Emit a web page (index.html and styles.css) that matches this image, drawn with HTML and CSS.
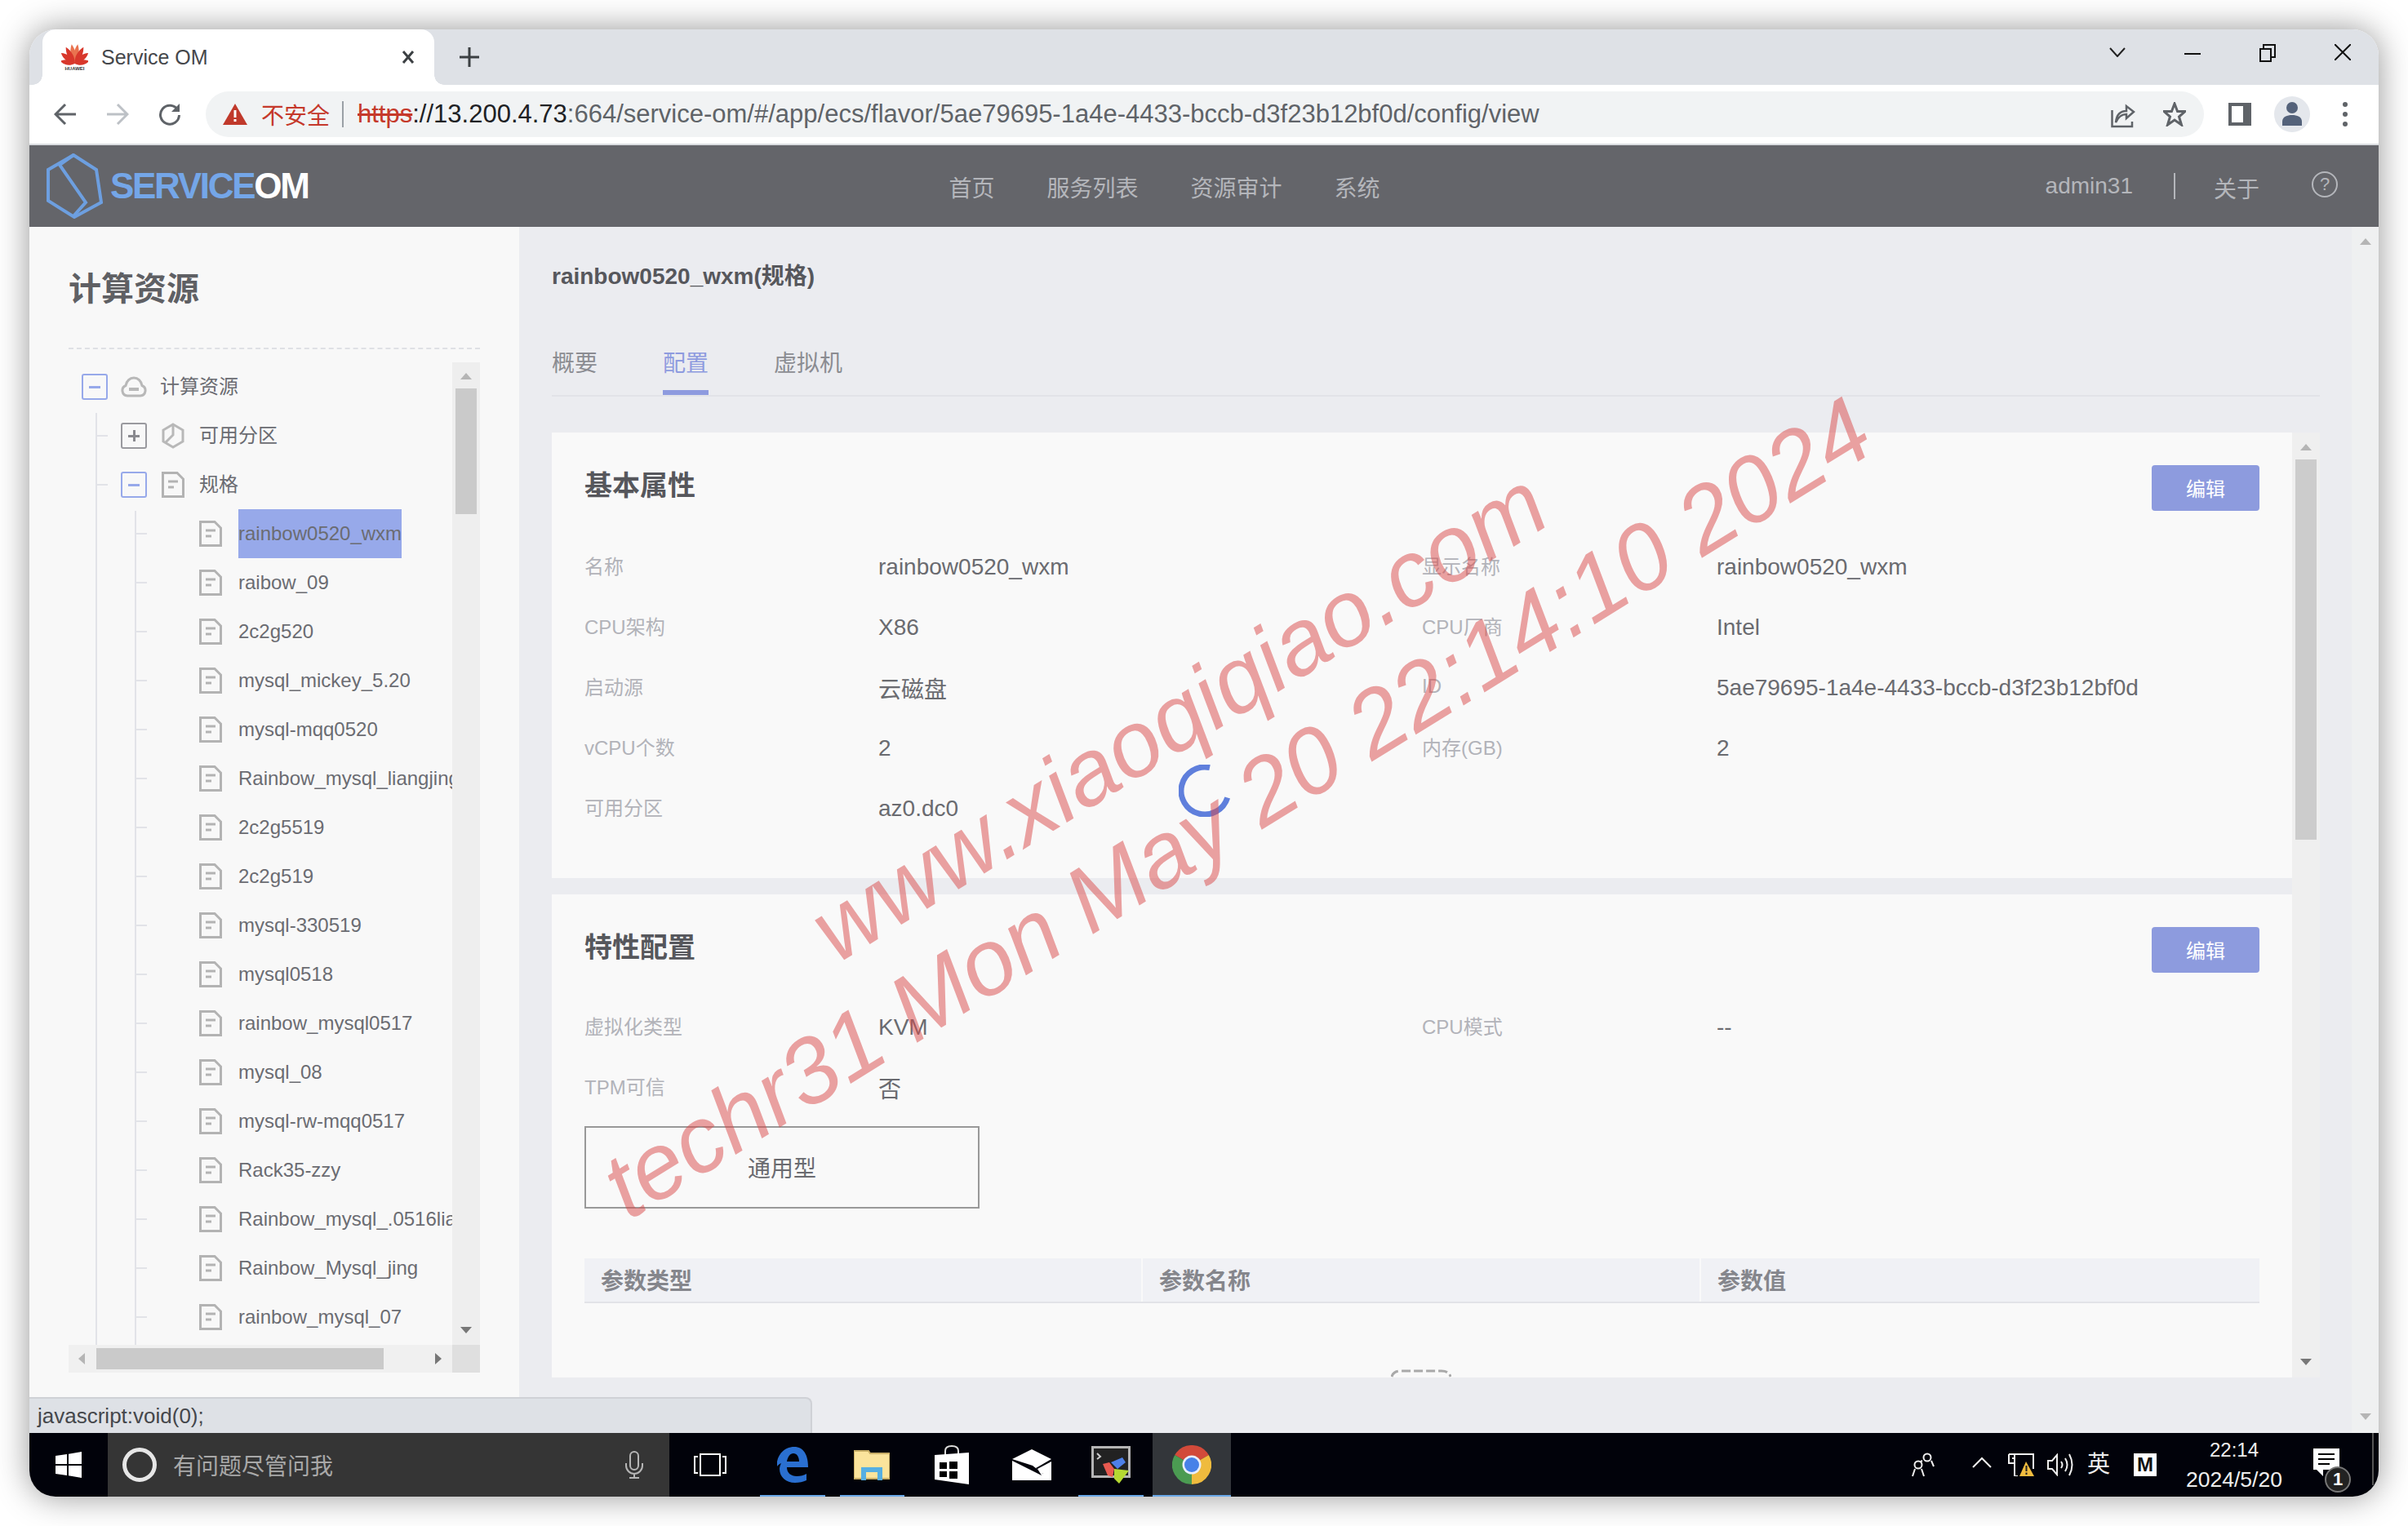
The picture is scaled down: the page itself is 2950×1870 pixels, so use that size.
FILE: index.html
```html
<!DOCTYPE html>
<html lang="zh-CN">
<head>
<meta charset="utf-8">
<title>Service OM</title>
<link rel="stylesheet" href="styles.css">
</head>
<body>
<svg class="defs" width="0" height="0" aria-hidden="true">
  <symbol id="doc" viewBox="0 0 28 32"><path d="M1.5 1.5H19L26.5 9V30.5H1.5Z" fill="none" stroke="#b3b3b3" stroke-width="3"/><path d="M8 12H20M8 19H15" stroke="#b3b3b3" stroke-width="3"/></symbol>
</svg>
<div class="window">
  <div class="tabstrip">
    <div class="tab">
      <svg class="favicon" viewBox="0 0 33 32" width="33" height="32">
        <g fill="#d8382c">
          <path d="M16.5 24C12 17 12.5 8 16.5 0C20.5 8 21 17 16.5 24Z" fill="#e9734f" transform="rotate(-9 16.5 24)"/>
          <path d="M16.5 24C12 17 12.5 8 16.5 0C20.5 8 21 17 16.5 24Z" fill="#e9734f" transform="rotate(9 16.5 24)"/>
          <path d="M16.5 24C12 17 12.5 8 16.5 1C20.5 8 21 17 16.5 24Z" transform="rotate(-28 16.5 24)"/>
          <path d="M16.5 24C12 17 12.5 8 16.5 1C20.5 8 21 17 16.5 24Z" transform="rotate(28 16.5 24)"/>
          <path d="M16.5 24C12 17 12.5 8 16.5 3C20.5 8 21 17 16.5 24Z" transform="rotate(-52 16.5 24)"/>
          <path d="M16.5 24C12 17 12.5 8 16.5 3C20.5 8 21 17 16.5 24Z" transform="rotate(52 16.5 24)"/>
          <path d="M16.5 24C12 18 12.5 12 16.5 6C20.5 12 21 18 16.5 24Z" transform="rotate(-80 16.5 24)"/>
          <path d="M16.5 24C12 18 12.5 12 16.5 6C20.5 12 21 18 16.5 24Z" transform="rotate(80 16.5 24)"/>
        </g>
        <text x="16.5" y="32" text-anchor="middle" class="favicon-text">HUAWEI</text>
      </svg>
      <span class="tab-title">Service OM</span>
      <svg class="tab-close" viewBox="0 0 16 20" width="16" height="20"><path d="M2 3L14 17M14 3L2 17" stroke="#3c4043" stroke-width="3"/></svg>
    </div>
    <svg class="newtab" viewBox="0 0 24 24" width="24" height="24"><path d="M12 0V24M0 12H24" stroke="#3c4043" stroke-width="3"/></svg>
    <div class="winctrl">
      <svg viewBox="0 0 20 12" width="20" height="12"><path d="M1 1L10 11L19 1" fill="none" stroke="#222" stroke-width="2"/></svg>
      <svg class="winctrl-min" viewBox="0 0 20 2" width="20" height="2"><path d="M0 1H20" stroke="#111" stroke-width="2"/></svg>
      <svg class="winctrl-max" viewBox="0 0 20 22" width="20" height="22"><path d="M1 6H14V21H1ZM5 6V1H19V16H14" fill="none" stroke="#111" stroke-width="2"/></svg>
      <svg class="winctrl-close" viewBox="0 0 20 20" width="20" height="20"><path d="M0 0L20 20M20 0L0 20" stroke="#111" stroke-width="2"/></svg>
    </div>
  </div>

  <div class="toolbar">
    <svg class="navbtn" viewBox="0 0 28 28" width="28" height="28"><path d="M27 14H3M14 2L2 14L14 26" fill="none" stroke="#5f6368" stroke-width="3"/></svg>
    <svg class="navbtn" viewBox="0 0 28 28" width="28" height="28"><path d="M1 14H25M14 2L26 14L14 26" fill="none" stroke="#bdc1c6" stroke-width="3"/></svg>
    <svg class="navbtn" viewBox="0 0 28 28" width="28" height="28"><path d="M24 9A11.5 11.5 0 1 0 25.5 15" fill="none" stroke="#5f6368" stroke-width="3"/><path d="M26 1V11H16Z" fill="#5f6368"/></svg>
    <div class="address">
      <svg class="warn" viewBox="0 0 30 26" width="30" height="26"><path d="M15 0L30 26H0Z" fill="#c0392b"/><path d="M13.5 8H16.5V17H13.5ZM13.5 19H16.5V22H13.5Z" fill="#fff"/></svg>
      <span class="insecure">不安全</span>
      <span class="addr-sep"></span>
      <span class="url"><s class="url-scheme">https</s><span class="url-host">://13.200.4.73</span><span class="url-rest">:664/service-om/#/app/ecs/flavor/5ae79695-1a4e-4433-bccb-d3f23b12bf0d/config/view</span></span>
      <span class="addr-icons">
        <svg viewBox="0 0 30 34" width="30" height="34"><path d="M1.5 12V32H26V26" fill="none" stroke="#5f6368" stroke-width="2.5"/><path d="M6 27C7 17 12 13 19 13V7L28 14L19 22V17C13 17 9 20 6 27Z" fill="none" stroke="#5f6368" stroke-width="2.5"/></svg>
        <svg viewBox="0 0 28 30" width="28" height="30"><path d="M14 2L17.6 11.5H27L19.5 18L22.5 28L14 22L5.500 28L8.500 18L1 11.500H10.400Z" fill="none" stroke="#5f6368" stroke-width="3"/></svg>
      </span>
    </div>
    <svg class="panelbtn" viewBox="0 0 28 28" width="28" height="28"><path d="M0 0H28V28H0Z" fill="#5f6368"/><path d="M4 4H18V24H4Z" fill="#fff"/></svg>
    <span class="profile">
      <svg viewBox="0 0 26 30" width="26" height="30"><circle cx="13" cy="8" r="7" fill="#54627a"/><path d="M1 30V25C1 19 7 17 13 17S25 19 25 25V30Z" fill="#54627a"/></svg>
    </span>
    <svg class="menubtn" viewBox="0 0 8 32" width="8" height="32"><circle cx="4" cy="4" r="3" fill="#5f6368"/><circle cx="4" cy="16" r="3" fill="#5f6368"/><circle cx="4" cy="28" r="3" fill="#5f6368"/></svg>
  </div>

  <header class="appbar">
    <a class="logo">
      <svg viewBox="0 0 70 80" width="70" height="80"><path d="M34 2L62 20L68 60L35 78L3 58V20Z" fill="none" stroke="#6d9fe0" stroke-width="4"/><path d="M34 2L17 14L49 60L33 78" fill="none" stroke="#6d9fe0" stroke-width="4"/></svg>
      <span class="logo-text"><span class="logo-blue">SERVICE</span>OM</span>
    </a>
    <nav class="appnav"><a>首页</a><a>服务列表</a><a>资源审计</a><a>系统</a></nav>
    <div class="appuser">
      <span>admin31</span>
      <span class="appuser-sep"></span>
      <span class="appuser-about">关于</span>
      <span class="help">?</span>
    </div>
  </header>

  <div class="content">
    <aside class="sidebar">
      <h2 class="side-title">计算资源</h2>
      <div class="tree">
        <div class="tree-view">
          <span class="guide guide-1"></span>
          <span class="guide guide-2"></span>
          <div class="row row-0"><span class="toggle toggle-open"></span><svg class="ico" viewBox="0 0 32 26" width="32" height="26"><path d="M8 24A6.500 6.500 0 0 1 6 11.500C7 6 11 2 16 2S25 6 26 11.500A6.500 6.500 0 0 1 24 24Z" fill="none" stroke="#b8b8b8" stroke-width="3"/><path d="M10 16H22" stroke="#b8b8b8" stroke-width="4"/></svg><span class="label">计算资源</span></div>
          <div class="row row-1"><span class="toggle toggle-closed"></span><svg class="ico" viewBox="0 0 28 32" width="28" height="32"><path d="M14 2L26 9V23L14 30L2 23V9Z" fill="none" stroke="#b8b8b8" stroke-width="3"/><path d="M14 2V15L5 24" fill="none" stroke="#b8b8b8" stroke-width="3"/></svg><span class="label">可用分区</span></div>
          <div class="row row-1"><span class="toggle toggle-open"></span><svg class="ico" width="28" height="32"><use href="#doc"/></svg><span class="label">规格</span></div>
          <div class="row row-2"><svg class="ico" width="28" height="32"><use href="#doc"/></svg><span class="label label-active">rainbow0520_wxm</span></div>
          <div class="row row-2"><svg class="ico" width="28" height="32"><use href="#doc"/></svg><span class="label">raibow_09</span></div>
          <div class="row row-2"><svg class="ico" width="28" height="32"><use href="#doc"/></svg><span class="label">2c2g520</span></div>
          <div class="row row-2"><svg class="ico" width="28" height="32"><use href="#doc"/></svg><span class="label">mysql_mickey_5.20</span></div>
          <div class="row row-2"><svg class="ico" width="28" height="32"><use href="#doc"/></svg><span class="label">mysql-mqq0520</span></div>
          <div class="row row-2"><svg class="ico" width="28" height="32"><use href="#doc"/></svg><span class="label">Rainbow_mysql_liangjing</span></div>
          <div class="row row-2"><svg class="ico" width="28" height="32"><use href="#doc"/></svg><span class="label">2c2g5519</span></div>
          <div class="row row-2"><svg class="ico" width="28" height="32"><use href="#doc"/></svg><span class="label">2c2g519</span></div>
          <div class="row row-2"><svg class="ico" width="28" height="32"><use href="#doc"/></svg><span class="label">mysql-330519</span></div>
          <div class="row row-2"><svg class="ico" width="28" height="32"><use href="#doc"/></svg><span class="label">mysql0518</span></div>
          <div class="row row-2"><svg class="ico" width="28" height="32"><use href="#doc"/></svg><span class="label">rainbow_mysql0517</span></div>
          <div class="row row-2"><svg class="ico" width="28" height="32"><use href="#doc"/></svg><span class="label">mysql_08</span></div>
          <div class="row row-2"><svg class="ico" width="28" height="32"><use href="#doc"/></svg><span class="label">mysql-rw-mqq0517</span></div>
          <div class="row row-2"><svg class="ico" width="28" height="32"><use href="#doc"/></svg><span class="label">Rack35-zzy</span></div>
          <div class="row row-2"><svg class="ico" width="28" height="32"><use href="#doc"/></svg><span class="label">Rainbow_mysql_.0516liangjing</span></div>
          <div class="row row-2"><svg class="ico" width="28" height="32"><use href="#doc"/></svg><span class="label">Rainbow_Mysql_jing</span></div>
          <div class="row row-2"><svg class="ico" width="28" height="32"><use href="#doc"/></svg><span class="label">rainbow_mysql_07</span></div>
        </div>
        <div class="vbar vbar-tree"><i class="arrow-up"></i><b class="vthumb vthumb-tree"></b><i class="arrow-down arrow-dark"></i></div>
        <div class="hbar"><i class="arrow-left"></i><b class="hthumb"></b><i class="arrow-right"></i></div>
        <div class="corner"></div>
      </div>
    </aside>

    <main class="main">
      <h1 class="page-title">rainbow0520_wxm(规格)</h1>
      <div class="tabs"><a>概要</a><a class="tabs-active">配置</a><a>虚拟机</a></div>
      <div class="panel">
        <div class="cards">
          <section class="card">
            <div class="card-head"><h3>基本属性</h3><button class="btn">编辑</button></div>
            <div class="fields">
              <span class="k">名称</span><span class="v">rainbow0520_wxm</span><span class="k">显示名称</span><span class="v">rainbow0520_wxm</span>
              <span class="k">CPU架构</span><span class="v">X86</span><span class="k">CPU厂商</span><span class="v">Intel</span>
              <span class="k">启动源</span><span class="v">云磁盘</span><span class="k">ID</span><span class="v">5ae79695-1a4e-4433-bccb-d3f23b12bf0d</span>
              <span class="k">vCPU个数</span><span class="v">2</span><span class="k">内存(GB)</span><span class="v">2</span>
              <span class="k">可用分区</span><span class="v">az0.dc0</span>
            </div>
          </section>
          <section class="card card-grow">
            <div class="card-head"><h3>特性配置</h3><button class="btn">编辑</button></div>
            <div class="fields fields-tight">
              <span class="k">虚拟化类型</span><span class="v">KVM</span><span class="k">CPU模式</span><span class="v">--</span>
              <span class="k">TPM可信</span><span class="v">否</span>
            </div>
            <div class="typebox">通用型</div>
            <div class="thead"><span>参数类型</span><span>参数名称</span><span>参数值</span></div>
          </section>
        </div>
        <div class="vbar vbar-panel"><i class="arrow-up"></i><b class="vthumb vthumb-panel"></b><i class="arrow-down arrow-dark"></i></div>
        <svg class="mini-loader" viewBox="0 0 74 10" width="74" height="10"><path d="M1 9Q3 2 12 2H62Q71 2 73 9" fill="none" stroke="#a9a9a9" stroke-width="3" stroke-dasharray="11 4"/></svg>
      </div>
    </main>

    <div class="pagebar"><i class="arrow-up"></i><i class="arrow-down"></i></div>

    <svg class="spinner" viewBox="0 0 64 64" width="64" height="64"><path d="M38 3.600A29 29 0 1 0 59.700 40.500" fill="none" stroke="#5f7fdc" stroke-width="7"/></svg>
    <div class="watermark watermark-a">www.xiaoqiqiao.com</div>
    <div class="watermark watermark-b">techr31 Mon May 20 22:14:10 2024</div>
    <div class="statusbubble">javascript:void(0);</div>
  </div>

  <footer class="taskbar">
    <div class="start"><svg viewBox="0 0 32 32" width="32" height="32"><path d="M0 5L14 3V15H0ZM16 2.700L32 0V15H16ZM0 17H14V29L0 27ZM16 17H32V32L16 29.300Z" fill="#fff"/></svg></div>
    <div class="search">
      <span class="cortana"></span>
      <span class="search-text">有问题尽管问我</span>
      <svg class="mic" viewBox="0 0 24 34" width="24" height="34"><rect x="7" y="1" width="10" height="22" rx="5" fill="none" stroke="#b5b5b5" stroke-width="2"/><path d="M2 15V18A10 10 0 0 0 22 18V15M12 28V33M6 33H18" fill="none" stroke="#b5b5b5" stroke-width="2"/></svg>
    </div>
    <div class="app app-view"><svg viewBox="0 0 40 28" width="40" height="28"><path d="M8 1H32V27H8Z" fill="none" stroke="#fff" stroke-width="2"/><path d="M5 4H1V24H5M35 4H39V24H35" fill="none" stroke="#fff" stroke-width="2"/></svg></div>
    <div class="app app-open"><svg viewBox="0 0 40 44" width="40" height="44"><path d="M1 18C3 7 12 0 22 0C33 0 39 9 39 25H13C13 32 18 36 25 36C30 36 34 35 37 33V41C33 43 28 44 23 44C12 44 4 37 4 27C4 25 5 22 6 20C4 21 2 22 1 24ZM13 18H28C28 12 25 8 21 8C17 8 14 12 13 18Z" fill="#2a6fd0"/></svg></div>
    <div class="app app-open"><svg viewBox="0 0 44 38" width="44" height="38"><path d="M0 2H18L20 5H44V36H0Z" fill="#fbe49c" stroke="#c8ae66" stroke-width="2"/><path d="M9 38V22H35V38H29V28H15V38Z" fill="#56afe2"/></svg></div>
    <div class="app"><svg viewBox="0 0 42 48" width="42" height="48"><path d="M13 12V7C13 3 16 1 21 1S29 3 29 7V12" fill="none" stroke="#ddd" stroke-width="2"/><path d="M0 12L42 9V48L0 42Z" fill="#fff"/><path d="M6 21H15V29H6ZM18 20H28V29H18ZM6 32H15V39H6ZM18 32H28V41H18Z" fill="#000"/></svg></div>
    <div class="app app-mail"><svg viewBox="0 0 48 38" width="48" height="38"><path d="M0 12L24 0L48 12L29 23L38 30L25 20L0 12ZM0 14L36 32L31 24L48 15V38H0Z" fill="#fff"/></svg></div>
    <div class="app app-open"><svg viewBox="0 0 48 46" width="48" height="46"><rect x="1.500" y="1.500" width="45" height="36" fill="#222" stroke="#b5b5b5" stroke-width="3"/><path d="M7 9L11 13L7 16" stroke="#ccc" fill="none" stroke-width="2"/><path d="M14 22L22 20L28 28L26 38L20 36Z" fill="#e85a50"/><path d="M24 20L38 14L42 20L32 28Z" fill="#4d80e8"/><path d="M28 28L46 30L34 46L28 40Z" fill="#b5d932"/></svg></div>
    <div class="app app-open app-active">
      <svg viewBox="0 0 48 48" width="48" height="48"><path d="M24 24L3.200 12A24 24 0 0 1 44.800 12Z" fill="#d24a3a"/><path d="M24 24L3.200 12A24 24 0 0 0 24 48Z" fill="#4b9b52"/><path d="M24 24L44.800 12A24 24 0 0 1 24 48Z" fill="#efbb3e"/><circle cx="24" cy="24" r="11.500" fill="#e8eefc"/><circle cx="24" cy="24" r="9" fill="#4781e8"/></svg>
    </div>
    <div class="tray">
      <svg class="tray-people" viewBox="0 0 29 30" width="29" height="30"><circle cx="20" cy="6" r="4.500" fill="none" stroke="#eee" stroke-width="2"/><circle cx="9" cy="15" r="4.500" fill="none" stroke="#eee" stroke-width="2"/><path d="M14 10L12 11M25 10L28 17M2 29L5 20M13 20L16 29" stroke="#eee" stroke-width="2" fill="none"/></svg>
      <svg class="tray-chev" viewBox="0 0 24 14" width="24" height="14"><path d="M1 13L12 2L23 13" fill="none" stroke="#eee" stroke-width="2"/></svg>
      <svg class="tray-net" viewBox="0 0 32 28" width="32" height="28"><path d="M1 1H31V19M1 1V12H8V28H12M8 1V12M5 6H9" fill="none" stroke="#eee" stroke-width="2"/><path d="M22 10L32 28H14Z" fill="#f2bd3f"/><path d="M21.500 15H23.500V22H21.500ZM21.500 23.500H23.500V26H21.500Z" fill="#222"/></svg>
      <svg class="tray-vol" viewBox="0 0 32 28" width="32" height="28"><path d="M1 9H6L12 2V26L6 19H1Z" fill="none" stroke="#eee" stroke-width="2"/><path d="M17 10Q20 14 17 18M22 6Q27 14 22 22M27 1Q34 14 27 27" fill="none" stroke="#eee" stroke-width="2"/></svg>
      <span class="tray-ime">英</span>
      <span class="tray-m">M</span>
      <div class="clock"><span>22:14</span><span>2024/5/20</span></div>
      <div class="notify">
        <svg viewBox="0 0 32 34" width="32" height="34"><path d="M0 0H32V26H12V34L4 26H0Z" fill="#fff"/><path d="M6 7H26M6 13H26M6 19H20" stroke="#000" stroke-width="2"/></svg>
        <span class="notify-badge">1</span>
      </div>
    </div>
  </footer>
</div>
</body>
</html>
```

FILE: styles.css
```css
html, body { margin: 0; padding: 0; background: #fff; }
body { width: 2950px; height: 1870px; overflow: hidden; font-family: "Liberation Sans", "Noto Sans CJK SC", sans-serif; }
.defs { position: absolute; }
h1, h2, h3 { margin: 0; }
a { display: block; }

.window { position: absolute; left: 36px; top: 36px; width: 2878px; height: 1798px; display: flex; flex-direction: column; overflow: hidden; border-radius: 32px; box-shadow: 0 0 40px rgba(0,0,0,.42); background: #fff; }

/* tab strip */
.tabstrip { height: 68px; flex: none; background: #dee1e6; display: flex; align-items: stretch; position: relative; }
.tab { position: relative; margin-left: 16px; width: 480px; background: #fff; border-radius: 16px 16px 0 0; display: flex; align-items: center; box-sizing: border-box; padding-left: 23px; }
.tab::before, .tab::after { content: ""; position: absolute; bottom: 0; width: 12px; height: 12px; }
.tab::before { left: -12px; background: radial-gradient(circle at 0 0, #dee1e6 11.500px, #fff 12px); }
.tab::after { right: -12px; background: radial-gradient(circle at 100% 0, #dee1e6 11.500px, #fff 12px); }
.favicon { flex: none; margin-top: -1px; }
.favicon-text { font-size: 6px; font-weight: 700; fill: #333; }
.tab-title { margin-left: 16px; font-size: 25px; color: #45474b; }
.tab-close { margin-left: 237px; }
.newtab { margin: 22px 0 0 31px; }
.winctrl { margin-left: auto; display: flex; align-items: flex-start; padding: 22px 34px 0 0; }
.winctrl-min { margin: 7px 0 0 72px; }
.winctrl-max { margin: -4px 0 0 72px; }
.winctrl-close { margin: -4px 0 0 72px; }

/* toolbar */
.toolbar { height: 72px; flex: none; background: #fff; border-bottom: 2px solid #dadce0; display: flex; align-items: center; padding-left: 30px; }
.navbtn { margin-right: 36px; flex: none; }
.navbtn + .address { margin-left: -6px; }
.address { height: 56px; width: 2448px; box-sizing: border-box; flex: none; background: #f1f3f4; border-radius: 28px; display: flex; align-items: center; padding: 0 22px 0 21px; }
.warn { flex: none; }
.insecure { margin-left: 17px; font-size: 28px; color: #c5392b; }
.addr-sep { width: 2px; height: 32px; background: #9aa0a6; margin: 0 17px 0 15px; }
.url { font-size: 31px; white-space: nowrap; color: #5f6368; }
.url-scheme { color: #c5392b; }
.url-host { color: #202124; }
.addr-icons { margin-left: auto; display: flex; align-items: center; gap: 34px; }
.panelbtn { margin-left: 30px; flex: none; }
.profile { margin-left: 28px; width: 44px; height: 44px; border-radius: 50%; background: #e4e7ec; display: flex; align-items: flex-end; justify-content: center; flex: none; }
.profile svg { margin-bottom: 8px; }
.menubtn { margin-left: 39px; flex: none; }

/* app bar */
.appbar { height: 100px; flex: none; background: #64656a; display: flex; align-items: center; padding: 0 50px 0 20px; color: #b4b6bb; font-size: 28px; }
.logo { display: flex; align-items: center; flex: none; }
.logo-text { margin-left: 9px; font-size: 44px; font-weight: 700; letter-spacing: -2.300px; color: #fff; }
.logo-blue { color: #74a6e8; }
.appnav { display: flex; gap: 64px; margin-left: 785px; padding-top: 2px; }
.appuser { margin-left: auto; display: flex; align-items: center; }
.appuser-sep { width: 2px; height: 32px; background: #b4b6bb; margin-left: 50px; }
.appuser-about { margin-left: 47px; padding-top: 3px; }
.help { margin: -4px 0 0 64px; width: 28px; height: 28px; border: 2px solid #b4b6bb; border-radius: 50%; display: flex; align-items: center; justify-content: center; font-size: 22px; }

/* content */
.content { position: relative; flex: 1; min-height: 0; display: flex; background: #ebecf0; }

.sidebar { width: 600px; flex: none; box-sizing: border-box; background: #f8f8f8; padding: 50px 48px 0; }
.side-title { font-size: 40px; line-height: 52px; font-weight: 700; color: #5f6064; padding-bottom: 46px; border-bottom: 2px dashed #dfe0e5; }
.tree { margin-top: 16px; display: grid; grid-template-columns: 470px 34px; grid-template-rows: 1204px 34px; }
.tree-view { position: relative; overflow: hidden; }
.guide { position: absolute; width: 2px; bottom: 0; background: #e2e3e8; }
.guide-1 { left: 33px; top: 62px; }
.guide-2 { left: 81px; top: 182px; }
.row { position: relative; height: 60px; display: flex; align-items: center; white-space: nowrap; font-size: 24px; color: #6b6c72; }
.row::before { content: ""; position: absolute; top: 29px; height: 2px; width: 15px; background: #e2e3e8; }
.row-0::before { display: none; }
.row-0 { padding-left: 16px; }
.row-1 { padding-left: 64px; }
.row-1::before { left: 33px; }
.row-2 { padding-left: 160px; }
.row-2::before { left: 81px; }
.toggle { position: relative; width: 32px; height: 32px; box-sizing: border-box; border-radius: 3px; margin-right: 16px; flex: none; }
.toggle::before { content: ""; position: absolute; left: 7px; right: 7px; top: 13px; height: 3px; }
.toggle-open { border: 2px solid #97a9ea; }
.toggle-open::before { background: #97a9ea; }
.toggle-closed { border: 2px solid #9a9a9f; }
.toggle-closed::before { background: #8a8a8f; }
.toggle-closed::after { content: ""; position: absolute; top: 7px; bottom: 7px; left: 13px; width: 3px; background: #8a8a8f; }
.ico { flex: none; margin-right: 20px; }
.row-0 .ico { margin-right: 16px; }
.row-1 .ico { margin-left: 2px; margin-right: 18px; }
.label { display: block; line-height: 60px; }
.label-active { background: #97a9ea; }

.vbar { position: relative; background: #eee; display: flex; flex-direction: column; align-items: center; box-sizing: border-box; }
.vthumb { display: block; width: 26px; }
.vbar-tree { padding: 13px 0 14px; }
.vthumb-tree { height: 154px; margin-top: 11px; background: #cacaca; }
.arrow-up, .arrow-down { display: block; flex: none; width: 0; height: 0; border-left: 7px solid transparent; border-right: 7px solid transparent; }
.arrow-up { border-bottom: 8px solid #b5b5b5; }
.arrow-down { border-top: 8px solid #b5b5b5; margin-top: auto; }
.arrow-dark { border-top-color: #777; }
.hbar { background: #f0f0f0; display: flex; align-items: center; }
.arrow-left, .arrow-right { display: block; width: 0; height: 0; border-top: 7px solid transparent; border-bottom: 7px solid transparent; flex: none; }
.arrow-left { margin-left: 12px; border-right: 8px solid #b5b5b5; }
.hthumb { display: block; width: 352px; height: 26px; margin-left: 14px; background: #cacaca; }
.arrow-right { margin-left: 63px; border-left: 8px solid #777; }
.corner { background: #dfdfdf; }

.main { flex: 1; min-width: 0; box-sizing: border-box; padding: 41px 39px 0 40px; display: flex; flex-direction: column; }
.page-title { font-size: 28px; line-height: 40px; font-weight: 700; color: #56575c; }
.tabs { margin-top: 67px; display: flex; gap: 80px; font-size: 28px; line-height: 40px; color: #8b8c92; border-bottom: 2px solid #e2e3e8; }
.tabs a { padding-bottom: 12px; border-bottom: 6px solid transparent; }
.tabs .tabs-active { color: #8e9bdf; border-bottom-color: #8e9bdf; }

.panel { position: relative; margin-top: 44px; height: 1158px; display: flex; }
.cards { width: 2132px; flex: none; display: flex; flex-direction: column; gap: 20px; }
.card { background: #f9f9f9; padding: 40px 40px 48px; }
.card-grow { flex: 1; min-height: 0; overflow: hidden; padding-bottom: 0; }
.card-head { display: flex; justify-content: space-between; align-items: flex-start; height: 56px; }
.card-head h3 { font-size: 34px; line-height: 50px; font-weight: 700; color: #56575c; }
.btn { width: 132px; height: 56px; padding: 0 0 2px; border: 0; border-radius: 4px; background: #8d9bde; color: #fff; font: 24px "Liberation Sans", "Noto Sans CJK SC", sans-serif; }
.fields { margin-top: 32px; display: grid; grid-template-columns: 360px 666px 361px 1fr; grid-auto-rows: 74px; align-items: center; }
.fields-tight { margin-top: 30px; }
.k { font-size: 24px; color: #b2b3b9; padding-bottom: 5px; }
.v { font-size: 28px; color: #6a6b70; }
.typebox { margin-top: 10px; width: 484px; height: 101px; box-sizing: border-box; border: 2px solid #999; display: flex; align-items: center; justify-content: center; font-size: 28px; color: #6a6b70; padding-bottom: 2px; }
.thead { margin-top: 61px; height: 55px; box-sizing: border-box; display: grid; grid-template-columns: 682px 684px 1fr; background: #f0f1f5; border-bottom: 2px solid #e2e3e8; }
.thead span { display: flex; align-items: center; padding: 0 0 2px 20px; font-size: 28px; font-weight: 700; color: #85868c; border-left: 2px solid #f9f9f9; }
.thead span:first-child { border-left: 0; }
.vbar-panel { width: 34px; flex: none; background: #efefef; padding: 14px 0 15px; }
.vthumb-panel { height: 466px; margin-top: 11px; background: #cccccc; }
.mini-loader { position: absolute; left: 1028px; bottom: 0; }

.pagebar { width: 33px; flex: none; background: #eff0f1; display: flex; flex-direction: column; align-items: center; padding: 14px 0 16px; box-sizing: border-box; }

.spinner { position: absolute; left: 1408px; top: 659px; }
.watermark { position: absolute; font-size: 114px; line-height: 1; font-style: italic; white-space: nowrap; color: rgba(217,71,71,.5); transform-origin: 0 96px; transform: rotate(-31.700deg); pointer-events: none; }
.watermark-a { left: 989px; top: 808px; }
.watermark-b { left: 734px; top: 1122px; }
.statusbubble { position: absolute; left: 0; bottom: 0; width: 959px; height: 44px; box-sizing: border-box; background: #dee1e6; border-top: 2px solid #cfd1d6; border-right: 2px solid #cfd1d6; border-top-right-radius: 8px; padding: 1px 0 0 10px; font-size: 26px; line-height: 40px; color: #45474b; }

/* taskbar */
.taskbar { position: relative; height: 78px; flex: none; background: #01020a; display: flex; align-items: stretch; }
.taskbar::after { content: ""; position: absolute; right: 6px; top: 0; width: 2px; height: 64px; background: #555; }
.start { width: 96px; flex: none; display: flex; align-items: center; justify-content: center; }
.search { width: 688px; flex: none; box-sizing: border-box; background: #353535; display: flex; align-items: center; padding-left: 18px; }
.cortana { width: 42px; height: 42px; box-sizing: border-box; border: 5px solid #e6e6e6; border-radius: 50%; flex: none; }
.search-text { margin-left: 20px; font-size: 28px; color: #a8a8a8; }
.mic { margin-left: 357px; flex: none; }
.app { position: relative; width: 97.500px; flex: none; display: flex; align-items: center; justify-content: center; }
.app-view { width: 102px; padding-right: 3px; box-sizing: border-box; }
.app-mail { left: 1px; }
.app-open::after { content: ""; position: absolute; left: 9px; right: 9px; bottom: 0; height: 2px; background: #6aa8e8; }
.app-active { width: 96px; margin-left: 2px; background: #33363a; }
.app-active::after { left: 0; right: 0; }
.tray { margin-left: auto; padding-right: 34px; display: flex; align-items: center; color: #eee; }
.tray-people { margin-right: 46px; flex: none; }
.tray-chev { margin-right: 20px; margin-top: -6px; flex: none; }
.tray-net { margin-right: 16px; flex: none; }
.tray-vol { margin-right: 17px; flex: none; }
.tray-ime { width: 28px; margin-right: 29px; font-size: 28px; line-height: 32px; }
.tray-m { width: 28px; height: 28px; margin-right: 36px; background: #fff; color: #111; font-size: 24px; font-weight: 700; line-height: 28px; text-align: center; }
.clock { width: 118px; margin-right: 38px; display: flex; flex-direction: column; align-items: center; gap: 10px; font-size: 26.500px; line-height: 27px; white-space: nowrap; }
.clock span:first-child { font-size: 24px; }
.notify { position: relative; width: 46px; height: 50px; margin-top: 10px; }
.notify-badge { position: absolute; right: 0; bottom: -4px; width: 32px; height: 32px; box-sizing: border-box; border: 2px solid #777; border-radius: 50%; background: #222; color: #fff; font-size: 22px; font-weight: 700; line-height: 28px; text-align: center; }
```
